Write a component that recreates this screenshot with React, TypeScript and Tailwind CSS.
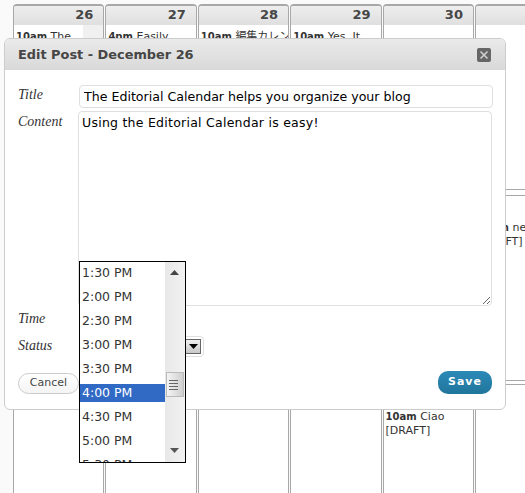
const sans = "font-['DejaVu_Sans','Noto_Sans_CJK_JP',sans-serif]";

const times = ["1:30 PM", "2:00 PM", "2:30 PM", "3:00 PM", "3:30 PM", "4:00 PM", "4:30 PM", "5:00 PM", "5:30 PM"];

type Day = { num?: string; time?: string; text?: string; draft?: boolean; add?: boolean };

const topRow: Day[] = [
  { num: "26", time: "10am", text: "The", add: true },
  { num: "27", time: "4pm", text: "Easily" },
  { num: "28", time: "10am", text: "編集カレンダ" },
  { num: "29", time: "10am", text: "Yes. It" },
  { num: "30" },
  {},
];

const midRow: Day[] = [{}, {}, {}, {}, {}, { time: "10am", text: "new", draft: true }];
const lowRow: Day[] = [{}, {}, {}, {}, { time: "10am", text: "Ciao", draft: true }, {}];

function Cell({ day, header, className }: { day: Day; header?: boolean; className: string }) {
  return (
    <div className={`relative mr-px w-[91.4px] shrink-0 overflow-hidden border-x border-[#a8a8a8] bg-white ${className}`}>
      {header && (
        <div className="h-[19px] bg-gradient-to-b from-[#eeeeee] to-[#dfdfdf] pr-[10px] text-right text-[13px] leading-[18px] font-bold text-[#464646]">
          {day.num}
        </div>
      )}
      {day.add && (
        <div className="absolute right-0 top-[19px] h-[18px] w-[20px] overflow-hidden bg-[#f0f0f0] text-center text-[11px] leading-[36px] text-[#333333]">
          +
        </div>
      )}
      {day.time && (
        <div className={`whitespace-nowrap pl-[2px] text-[11px] leading-[14px] text-[#333333] ${header ? "pt-[5px]" : "pt-[25px]"}`}>
          <b className="text-[10px]">{day.time}</b> {day.text}
          {day.draft && <div>[DRAFT]</div>}
        </div>
      )}
    </div>
  );
}

function Row({ days, header, className }: { days: Day[]; header?: boolean; className: string }) {
  return (
    <div className={`flex ${className}`}>
      {days.map((d, i) => (
        <Cell key={i} day={d} header={header} className={`h-full ${header ? "rounded-t-[4px] border-t-2" : ""}`} />
      ))}
    </div>
  );
}

function EditDialog() {
  return (
    <div className="absolute left-[4px] top-[38px] h-[372px] w-[502px] overflow-hidden rounded-[6px] border border-[#cccccc] bg-white">
      <div className="flex h-[31px] items-center justify-between bg-gradient-to-b from-[#eaeaea] to-[#d9d9d9] pl-[13px] pr-[14px]">
        <span className="text-[12.9px] font-bold text-[#464646]">Edit Post - December 26</span>
        <span className="flex h-[14px] w-[14px] items-center justify-center rounded-[2px] bg-[#666666]">
          <svg width="10" height="10" viewBox="0 0 10 10">
            <path d="M1.5 1.5 L8.5 8.5 M8.5 1.5 L1.5 8.5" stroke="#cfcfcf" strokeWidth="1.6" />
          </svg>
        </span>
      </div>
      <div className="pl-[13px] pr-[13px]">
        <div className="mt-[15px] flex items-start">
          <span className="h-[23px] w-[61px] shrink-0 font-['Liberation_Serif',serif] text-[14px] leading-[20px] italic text-[#333333]">Title</span>
          <input
            readOnly
            value="The Editorial Calendar helps you organize your blog"
            className="h-[23px] w-[414px] shrink-0 rounded-[4px] border border-[#dfdfdf] px-[4px] text-[12.6px] text-black outline-none"
          />
        </div>
        <div className="mt-[3px] flex items-start">
          <span className="w-[60px] shrink-0 pt-[1px] font-['Liberation_Serif',serif] text-[14px] leading-[20px] italic text-[#333333]">Content</span>
          <textarea
            readOnly
            value="Using the Editorial Calendar is easy!"
            className="h-[195px] w-[414px] shrink-0 rounded-[4px] border border-[#dfdfdf] px-[3px] py-[2px] text-[12.5px] tracking-[0.25px] text-black outline-none"
          />
        </div>
        <div className="mt-px flex h-[24px] items-center">
          <span className="w-[61px] pb-[2px] font-['Liberation_Serif',serif] text-[14px] italic text-[#333333]">Time</span>
          <div className="h-[22px] w-[107px] rounded-[4px] border border-[#dfdfdf]" />
        </div>
        <div className="mt-[3px] flex h-[24px] items-center">
          <span className="w-[61px] pb-[2px] font-['Liberation_Serif',serif] text-[14px] italic text-[#333333]">Status</span>
          <div className="flex h-[21px] w-[125px] justify-end rounded-[4px] border border-[#dfdfdf] p-[2px]">
            <div className="flex h-[15px] w-[16px] items-center justify-center border border-[#666666] bg-gradient-to-b from-[#f0f0f0] to-[#c8c8c8]">
              <svg width="9" height="5" viewBox="0 0 9 5">
                <path d="M0 0 H9 L4.5 5 Z" fill="#000000" />
              </svg>
            </div>
          </div>
        </div>
        <div className="mt-[15px] flex items-start justify-between">
          <button className="h-[21px] w-[61px] rounded-full border border-[#cccccc] bg-gradient-to-b from-white to-[#f4f4f4] text-[11px] text-[#464646]">
            Cancel
          </button>
          <button className="-mt-[2px] h-[23px] w-[54px] rounded-[10px] bg-gradient-to-b from-[#2b8ab8] to-[#21759b] text-[11px] font-bold tracking-[1px] text-white">
            Save
          </button>
        </div>
      </div>
    </div>
  );
}

function TimePopup() {
  return (
    <div className="absolute left-[79px] top-[261px] flex h-[202px] w-[107px] border border-black bg-white">
      <div className="h-full w-[85px] overflow-hidden pt-[2px]">
        {times.map((t) => (
          <div
            key={t}
            className={`mb-[6px] h-[18px] pl-[2px] text-[12.5px] leading-[18px] ${
              t === "4:00 PM" ? "bg-[#316ac5] text-white" : "text-[#333333]"
            }`}
          >
            {t}
          </div>
        ))}
      </div>
      <div className="relative h-full w-[20px] bg-gradient-to-r from-[#e8e8e8] to-[#f2f2f2]">
        <svg className="absolute left-[5px] top-[8px]" width="9" height="5" viewBox="0 0 9 5">
          <path d="M4.5 0 L9 5 H0 Z" fill="#444444" />
        </svg>
        <div className="absolute left-[1px] top-[110px] flex h-[25px] w-[18px] flex-col items-center justify-center gap-[2px] border border-[#bbbbbb] bg-gradient-to-r from-[#f4f4f4] to-[#cfcfcf] pr-[3px]">
          <div className="h-px w-[9px] bg-[#666666]" />
          <div className="h-px w-[9px] bg-[#666666]" />
          <div className="h-px w-[9px] bg-[#666666]" />
          <div className="h-px w-[9px] bg-[#666666]" />
        </div>
        <svg className="absolute bottom-[9px] left-[5px]" width="9" height="5" viewBox="0 0 9 5">
          <path d="M0 0 H9 L4.5 5 Z" fill="#555555" />
        </svg>
      </div>
    </div>
  );
}

export default function App() {
  return (
    <div className={`relative h-[493px] w-[525px] overflow-hidden bg-[#fafafa] pt-[4px] pl-[13px] ${sans}`}>
      <Row days={topRow} header className="h-[185px]" />
      <div className="h-px bg-[#a8a8a8]" />
      <div className="h-[5px] bg-white" />
      <div className="h-px bg-[#a8a8a8]" />
      <Row days={midRow} className="h-[184px]" />
      <div className="h-px bg-[#a8a8a8]" />
      <div className="h-[3px] bg-white" />
      <div className="h-px bg-[#a8a8a8]" />
      <Row days={lowRow} className="h-[120px]" />
      <EditDialog />
      <TimePopup />
    </div>
  );
}
